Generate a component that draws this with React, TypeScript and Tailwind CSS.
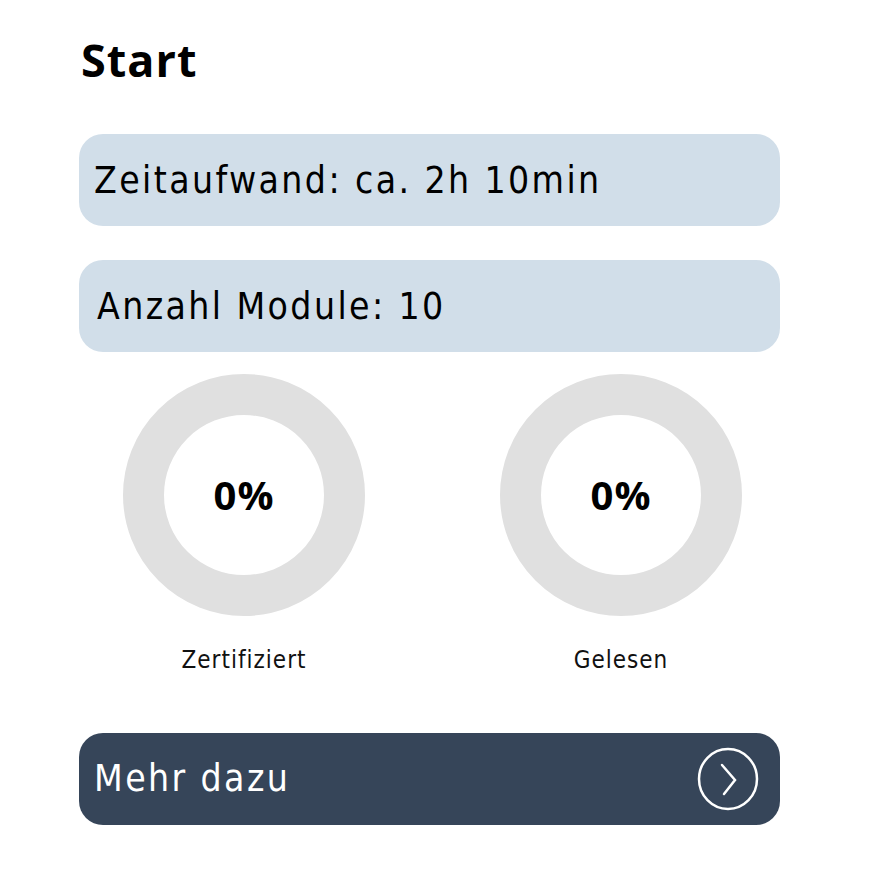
import React from "react";

const stats = [
  { label: "Zertifiziert", value: 0 },
  { label: "Gelesen", value: 0 },
];

const body = { fontFamily: '"DejaVu Sans Condensed", "DejaVu Sans", sans-serif' };

function Ring({ value, label }: { value: number; label: string }) {
  return (
    <div className="flex flex-col items-center">
      <div className="w-[242px] h-[242px] rounded-full border-[41px] border-[#e0e0e0] flex items-center justify-center">
        <span className="text-[40px] font-bold text-black leading-none tracking-[1px]">{value}%</span>
      </div>
      <span className="mt-[32px] text-[24px] text-[#111] leading-none tracking-[1px]" style={body}>
        {label}
      </span>
    </div>
  );
}

export default function App() {
  return (
    <div
      className="w-[874px] h-[874px] bg-white pl-[79px] pt-[34px]"
      style={{ fontFamily: '"Open Sans", "DejaVu Sans", sans-serif' }}
    >
      <div className="w-[701px]">
        <h1 className="ml-[2px] text-[45px] font-bold text-black leading-[52px] tracking-[1px]">Start</h1>

        <div className="mt-[48px] flex flex-col gap-[34px]" style={body}>
          <div className="h-[92px] rounded-[24px] bg-[#d1dee9] flex items-center pl-[15px] pt-[2px] text-[37px] text-black tracking-[2.4px]">
            Zeitaufwand: ca. 2h 10min
          </div>
          <div className="h-[92px] rounded-[24px] bg-[#d1dee9] flex items-center pl-[18px] pt-[2px] text-[37px] text-black tracking-[2.4px]">
            Anzahl Module: 10
          </div>
        </div>

        <div className="mt-[22px] flex pl-[44px] gap-[135px]">
          {stats.map((s) => (
            <Ring key={s.label} value={s.value} label={s.label} />
          ))}
        </div>

        <button
          className="mt-[61px] w-full h-[92px] rounded-[24px] bg-[#364559] flex items-center justify-between pl-[15px] pr-[21px] text-white text-[37px] tracking-[2.4px]"
          style={body}
        >
          <span>Mehr dazu</span>
          <svg width="62" height="64" viewBox="0 0 62 64" fill="none" stroke="white" strokeWidth="2.5" strokeLinecap="round">
            <ellipse cx="31" cy="32" rx="29" ry="30" />
            <path d="M25 18 L38 33 L27 47" />
          </svg>
        </button>
      </div>
    </div>
  );
}
